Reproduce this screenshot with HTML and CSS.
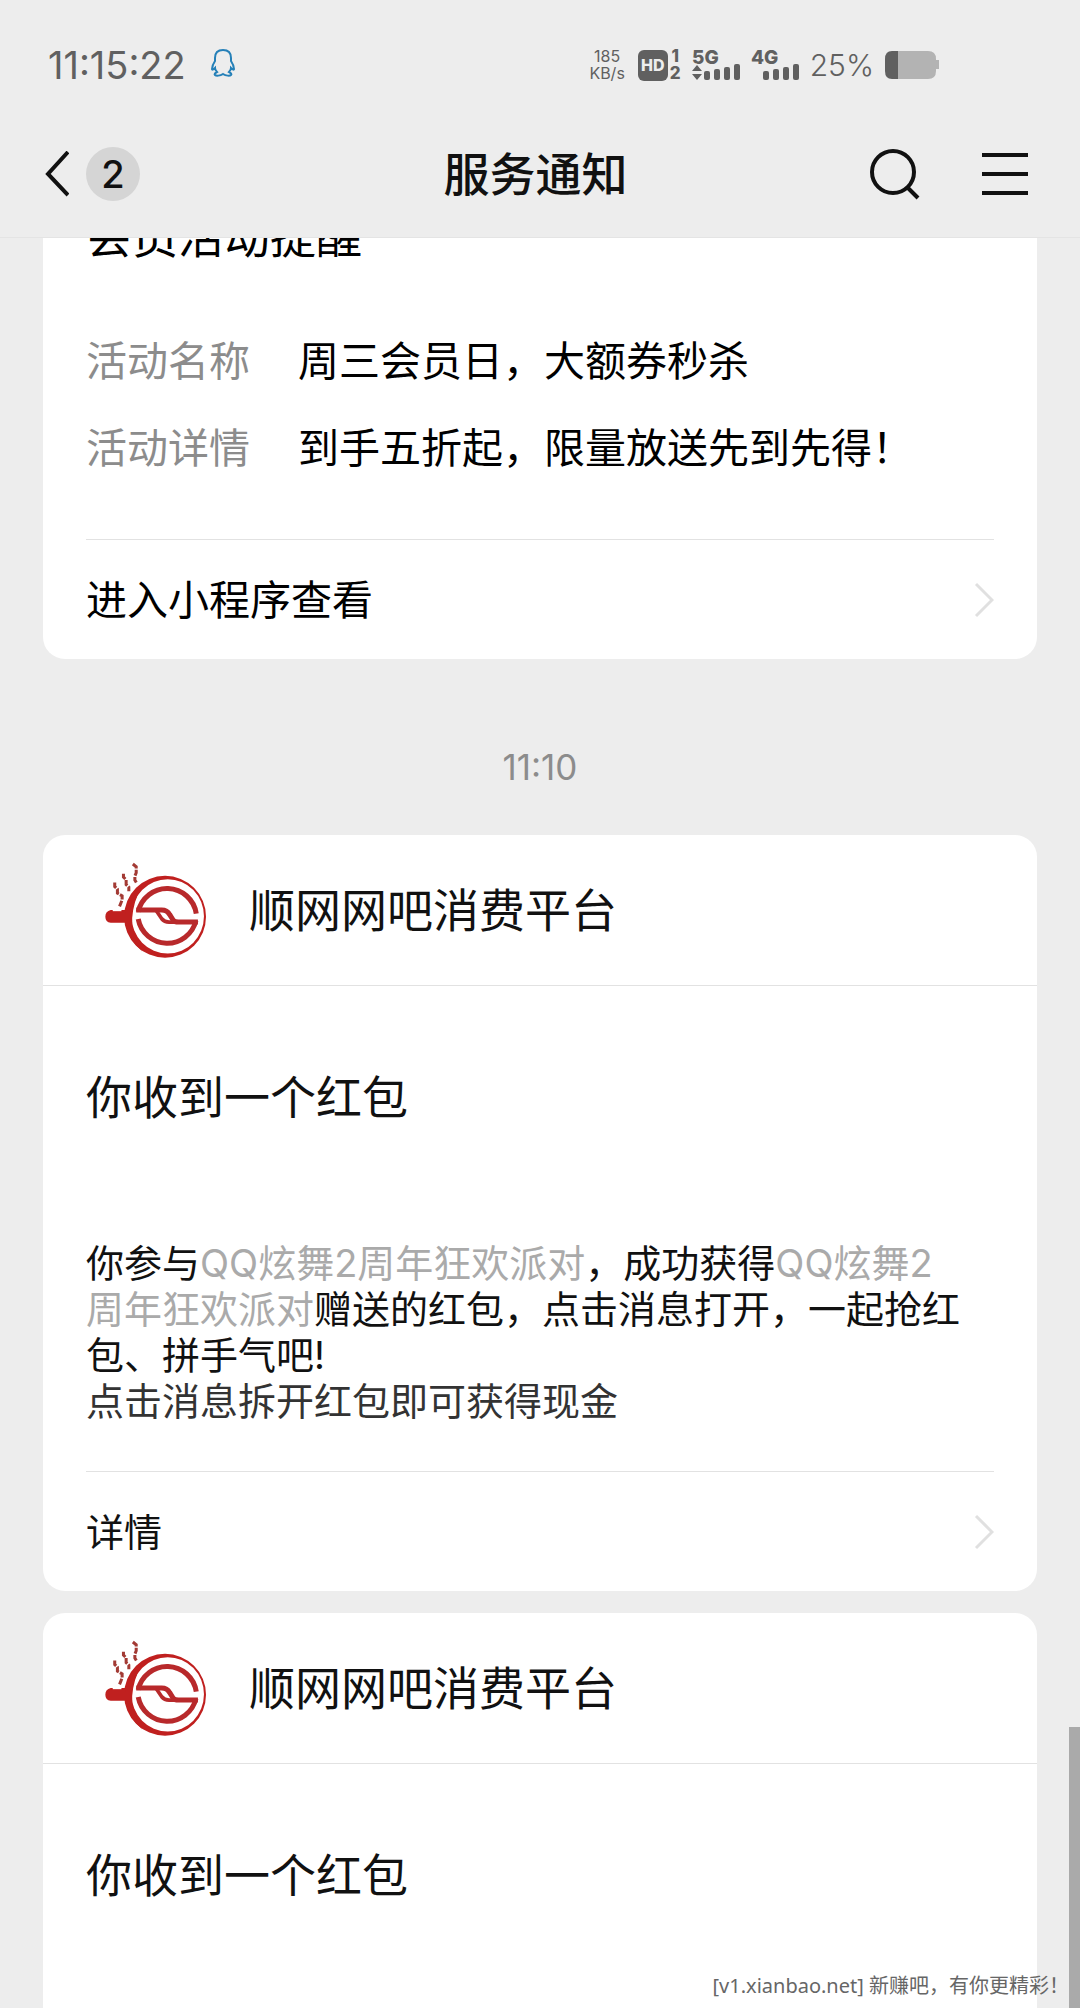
FILE: index.html
```html
<!DOCTYPE html>
<html lang="zh-CN">
<head>
    <meta charset="UTF-8">
    <meta name="viewport" content="width=device-width, initial-scale=1.0">
    <title>服务通知</title>
    <link rel="stylesheet" href="styles.css">
</head>
<body>
    <!-- shared logo -->
    <svg class="symbols" aria-hidden="true">
        <symbol id="logo" viewBox="72 68 310 292">
            <path fill="#c0201f" fill-rule="evenodd" d="M254 112a122 122 0 1 1 0 244a122 122 0 1 1 0-244zM262 122a107 110 0 1 0 0 222a107 110 0 1 0 0-222z"/>
            <path fill="#c0201f" d="M135 214H92q-16 4-16 20t16 18h44zM160 160q-30 40-24 90t50 88q-34-48-30-100t28-92z"/>
            <path stroke="#fff" stroke-width="5" d="M98 215h26"/>
            <g fill="none" stroke="#b8292b" stroke-width="15">
                <path d="M174 219a88 88 0 0 1 173 6"/>
                <path d="M174 241a88 88 0 0 0 172 5"/>
                <path d="M168 214h76q16 0 24 14l10 16q5 6 16 6h58"/>
                <path d="M228 216l16 24q8 10 22 10h30" stroke-width="11"/>
            </g>
            <g fill="none" stroke="#a33a34" stroke-width="9" stroke-dasharray="18 4">
                <path d="M104 132v12l8 8v12l14 8v12l-8 20"/>
                <path d="M130 106v10l8 8v14l8 8v12"/>
                <path d="M158 77l10 8v18l-4 10v12l6 10"/>
            </g>
        </symbol>
    </svg>

    <header class="top">
        <div class="status-bar">
            <span class="clock">11:15:22</span>
            <svg class="penguin" width="26" height="30" viewBox="0 0 26 30">
                <path d="M13 2C8 2 5 5 5 10v3c-2 3-3 6-3 8 0 1 1 1 3-1 0 2 1 3 2 4-2 1-3 2-2 3s5 1 8-1c3 2 7 2 8 1s0-2-2-3c1-1 2-2 2-4 2 2 3 2 3 1 0-2-1-5-3-8v-3c0-5-3-8-8-8z"/>
            </svg>
            <div class="status-icons">
                <div class="speed"><span>185</span><span>KB/s</span></div>
                <div class="hd">
                    <span class="hd-box">HD</span>
                    <span class="hd-sims"><span>1</span><span>2</span></span>
                </div>
                <svg width="48" height="32" viewBox="0 0 48 32">
                    <text x="0" y="15">5G</text>
                    <path d="M5 16l5 6H0zM5 31l5-6H0z"/>
                    <rect x="12" y="22" width="6" height="9" rx="2"/>
                    <rect x="22" y="20" width="6" height="11" rx="2"/>
                    <rect x="32" y="18" width="6" height="13" rx="2"/>
                    <rect x="42" y="15" width="6" height="16" rx="2"/>
                </svg>
                <svg width="48" height="32" viewBox="0 0 48 32">
                    <text x="0" y="15">4G</text>
                    <rect x="12" y="22" width="6" height="9" rx="2"/>
                    <rect x="22" y="20" width="6" height="11" rx="2"/>
                    <rect x="32" y="18" width="6" height="13" rx="2"/>
                    <rect x="42" y="15" width="6" height="16" rx="2"/>
                </svg>
                <span class="percent">25%</span>
                <svg width="54" height="28" viewBox="0 0 54 28">
                    <path fill="#b3b3b3" d="M12 0h31q8 0 8 8v1h3v9h-3v2q0 8-8 8H12z"/>
                    <path d="M13 0H7Q0 0 0 8v12q0 8 7 8h6z"/>
                </svg>
            </div>
        </div>
        <nav class="nav-bar">
            <div class="nav-side">
                <button class="back" type="button" aria-label="返回">
                    <svg width="26" height="46" viewBox="0 0 26 46"><path d="M25 1L5 23l20 21"/></svg>
                    <span class="badge">2</span>
                </button>
            </div>
            <h1>服务通知</h1>
            <div class="nav-side nav-right">
                <button type="button" aria-label="搜索">
                    <svg width="52" height="52" viewBox="0 0 52 52"><circle cx="23" cy="24" r="21"/><path d="M37 39l11 11"/></svg>
                </button>
                <button type="button" aria-label="菜单">
                    <svg width="46" height="46" viewBox="0 0 46 46"><path d="M0 4h46M0 23h46M0 42h46"/></svg>
                </button>
            </div>
        </nav>
    </header>

    <main class="messages">
        <article class="card card-first">
            <div class="card-body">
                <h2>会员活动提醒</h2>
                <dl class="fields">
                    <dt>活动名称</dt>
                    <dd>周三会员日，大额券秒杀</dd>
                    <dt>活动详情</dt>
                    <dd>到手五折起，限量放送先到先得！</dd>
                </dl>
            </div>
            <a class="card-link card-link-large" href="#">
                进入小程序查看
                <svg width="20" height="36" viewBox="0 0 20 36"><path d="M2 2l16 16L2 34"/></svg>
            </a>
        </article>

        <time class="time">11:10</time>

        <article class="card">
            <div class="card-head">
                <svg class="logo" width="104" height="98"><use href="#logo"/></svg>
                <span>顺网网吧消费平台</span>
            </div>
            <div class="card-body">
                <h2>你收到一个红包</h2>
                <p class="detail">你参与<em>QQ炫舞2周年狂欢派对</em>，成功获得<em>QQ炫舞2<br>周年狂欢派对</em>赠送的红包，点击消息打开，一起抢红包、拼手气吧!</p>
                <p class="remark">点击消息拆开红包即可获得现金</p>
            </div>
            <a class="card-link" href="#">
                详情
                <svg width="20" height="36" viewBox="0 0 20 36"><path d="M2 2l16 16L2 34"/></svg>
            </a>
        </article>

        <article class="card">
            <div class="card-head">
                <svg class="logo" width="104" height="98"><use href="#logo"/></svg>
                <span>顺网网吧消费平台</span>
            </div>
            <div class="card-body">
                <h2>你收到一个红包</h2>
            </div>
        </article>
    </main>

    <div class="scrollbar"></div>
    <div class="watermark">[v1.xianbao.net] 新赚吧，有你更精彩！</div>
</body>
</html>
```
FILE: styles.css
```css
* {
    margin: 0;
    padding: 0;
    box-sizing: border-box;
}

body {
    position: relative;
    display: flex;
    flex-direction: column;
    height: 100vh;
    overflow: hidden;
    background: #ededed;
    color: #111;
    font-family: Inter, "Noto Sans CJK SC", sans-serif;
}

button {
    display: flex;
    align-items: center;
    border: none;
    background: none;
    color: inherit;
    font: inherit;
    cursor: pointer;
}

.symbols {
    position: absolute;
    width: 0;
    height: 0;
}

/* Status bar */
.status-bar {
    display: flex;
    align-items: center;
    height: 110px;
    padding: 20px 141px 0 48px;
    color: #606060;
}

.clock {
    font-size: 38px;
}

.penguin {
    margin: 0 0 4px 24px;
    fill: none;
    stroke: #2580b8;
    stroke-width: 2;
}

.status-icons {
    display: flex;
    align-items: center;
    gap: 11px;
    margin-left: auto;
}

.status-icons svg {
    overflow: visible;
    fill: #606060;
    font-size: 19px;
    font-weight: 800;
}

.speed {
    display: flex;
    flex-direction: column;
    align-items: center;
    margin-right: 2px;
    font-size: 16px;
    line-height: 17px;
}

.hd {
    display: flex;
    align-items: center;
    gap: 2px;
    font-weight: 800;
}

.hd-box {
    width: 30px;
    border-radius: 6px;
    background: #606060;
    color: #ededed;
    font-size: 16px;
    line-height: 31px;
    text-align: center;
}

.hd-sims {
    display: flex;
    flex-direction: column;
    align-items: center;
    font-size: 17px;
    line-height: 17px;
}

.percent {
    font-size: 30px;
    font-weight: 300;
}

/* Navigation */
.nav-bar {
    display: flex;
    align-items: center;
    height: 128px;
    padding: 0 52px 0 43px;
    border-bottom: 1px solid #e4e4e4;
}

.nav-bar svg {
    fill: none;
    stroke: #111;
    stroke-width: 4;
}

.nav-bar h1 {
    font-size: 46px;
    font-weight: 500;
    line-height: 60px;
}

.nav-side {
    display: flex;
    flex: 1;
}

.nav-right {
    justify-content: flex-end;
    gap: 60px;
}

.back {
    gap: 17px;
}

.badge {
    width: 54px;
    height: 54px;
    border-radius: 50%;
    background: #d5d5d5;
    font-size: 38px;
    font-weight: 500;
    line-height: 54px;
    text-align: center;
}

/* Messages */
.messages {
    flex: 1;
    min-height: 0;
    overflow: hidden;
    padding: 0 43px;
}

.card {
    margin-bottom: 22px;
    border-radius: 22px;
    background: #fff;
}

.card-head {
    display: flex;
    align-items: center;
    gap: 41px;
    height: 151px;
    padding: 0 61px;
    border-bottom: 1px solid #e2e2e2;
    font-size: 46px;
    line-height: 60px;
}

.card-body {
    padding: 81px 43px 47px;
}

.card-body h2 {
    margin-bottom: 113px;
    font-size: 46px;
    font-weight: 400;
    line-height: 60px;
}

.detail,
.remark {
    font-size: 38px;
    line-height: 46px;
}

.detail em {
    color: #aaa;
    font-style: normal;
}

.remark {
    color: #333;
}

.card-link {
    display: flex;
    align-items: center;
    justify-content: space-between;
    height: 120px;
    margin: 0 43px;
    border-top: 1px solid #e2e2e2;
    color: #111;
    font-size: 38px;
    line-height: 60px;
    text-decoration: none;
}

.card-link svg {
    fill: none;
    stroke: #e0e0e0;
    stroke-width: 3;
}

.card-link-large {
    color: #000;
    font-size: 41px;
}

/* First card is scrolled partly under the header */
.card-first {
    margin: -32px 0 0;
    color: #000;
}

.card-first .card-body {
    padding: 0 43px 61px;
}

.card-first h2 {
    margin-bottom: 65px;
}

.fields {
    display: grid;
    grid-template-columns: max-content 1fr;
    gap: 27px 48px;
    font-size: 41px;
    line-height: 60px;
}

.fields dt {
    color: #8c8c8c;
}

.time {
    display: block;
    margin: 88px 0 48px;
    color: #8c8c8c;
    font-size: 35px;
    line-height: 40px;
    text-align: center;
}

.scrollbar {
    position: absolute;
    right: 0;
    bottom: 0;
    width: 11px;
    height: 14%;
    background: #aaa;
}

.watermark {
    position: absolute;
    right: 11px;
    bottom: 8px;
    color: #666;
    font-family: "Noto Sans", "Noto Sans CJK SC", sans-serif;
    font-size: 20px;
    line-height: 28px;
}
```
